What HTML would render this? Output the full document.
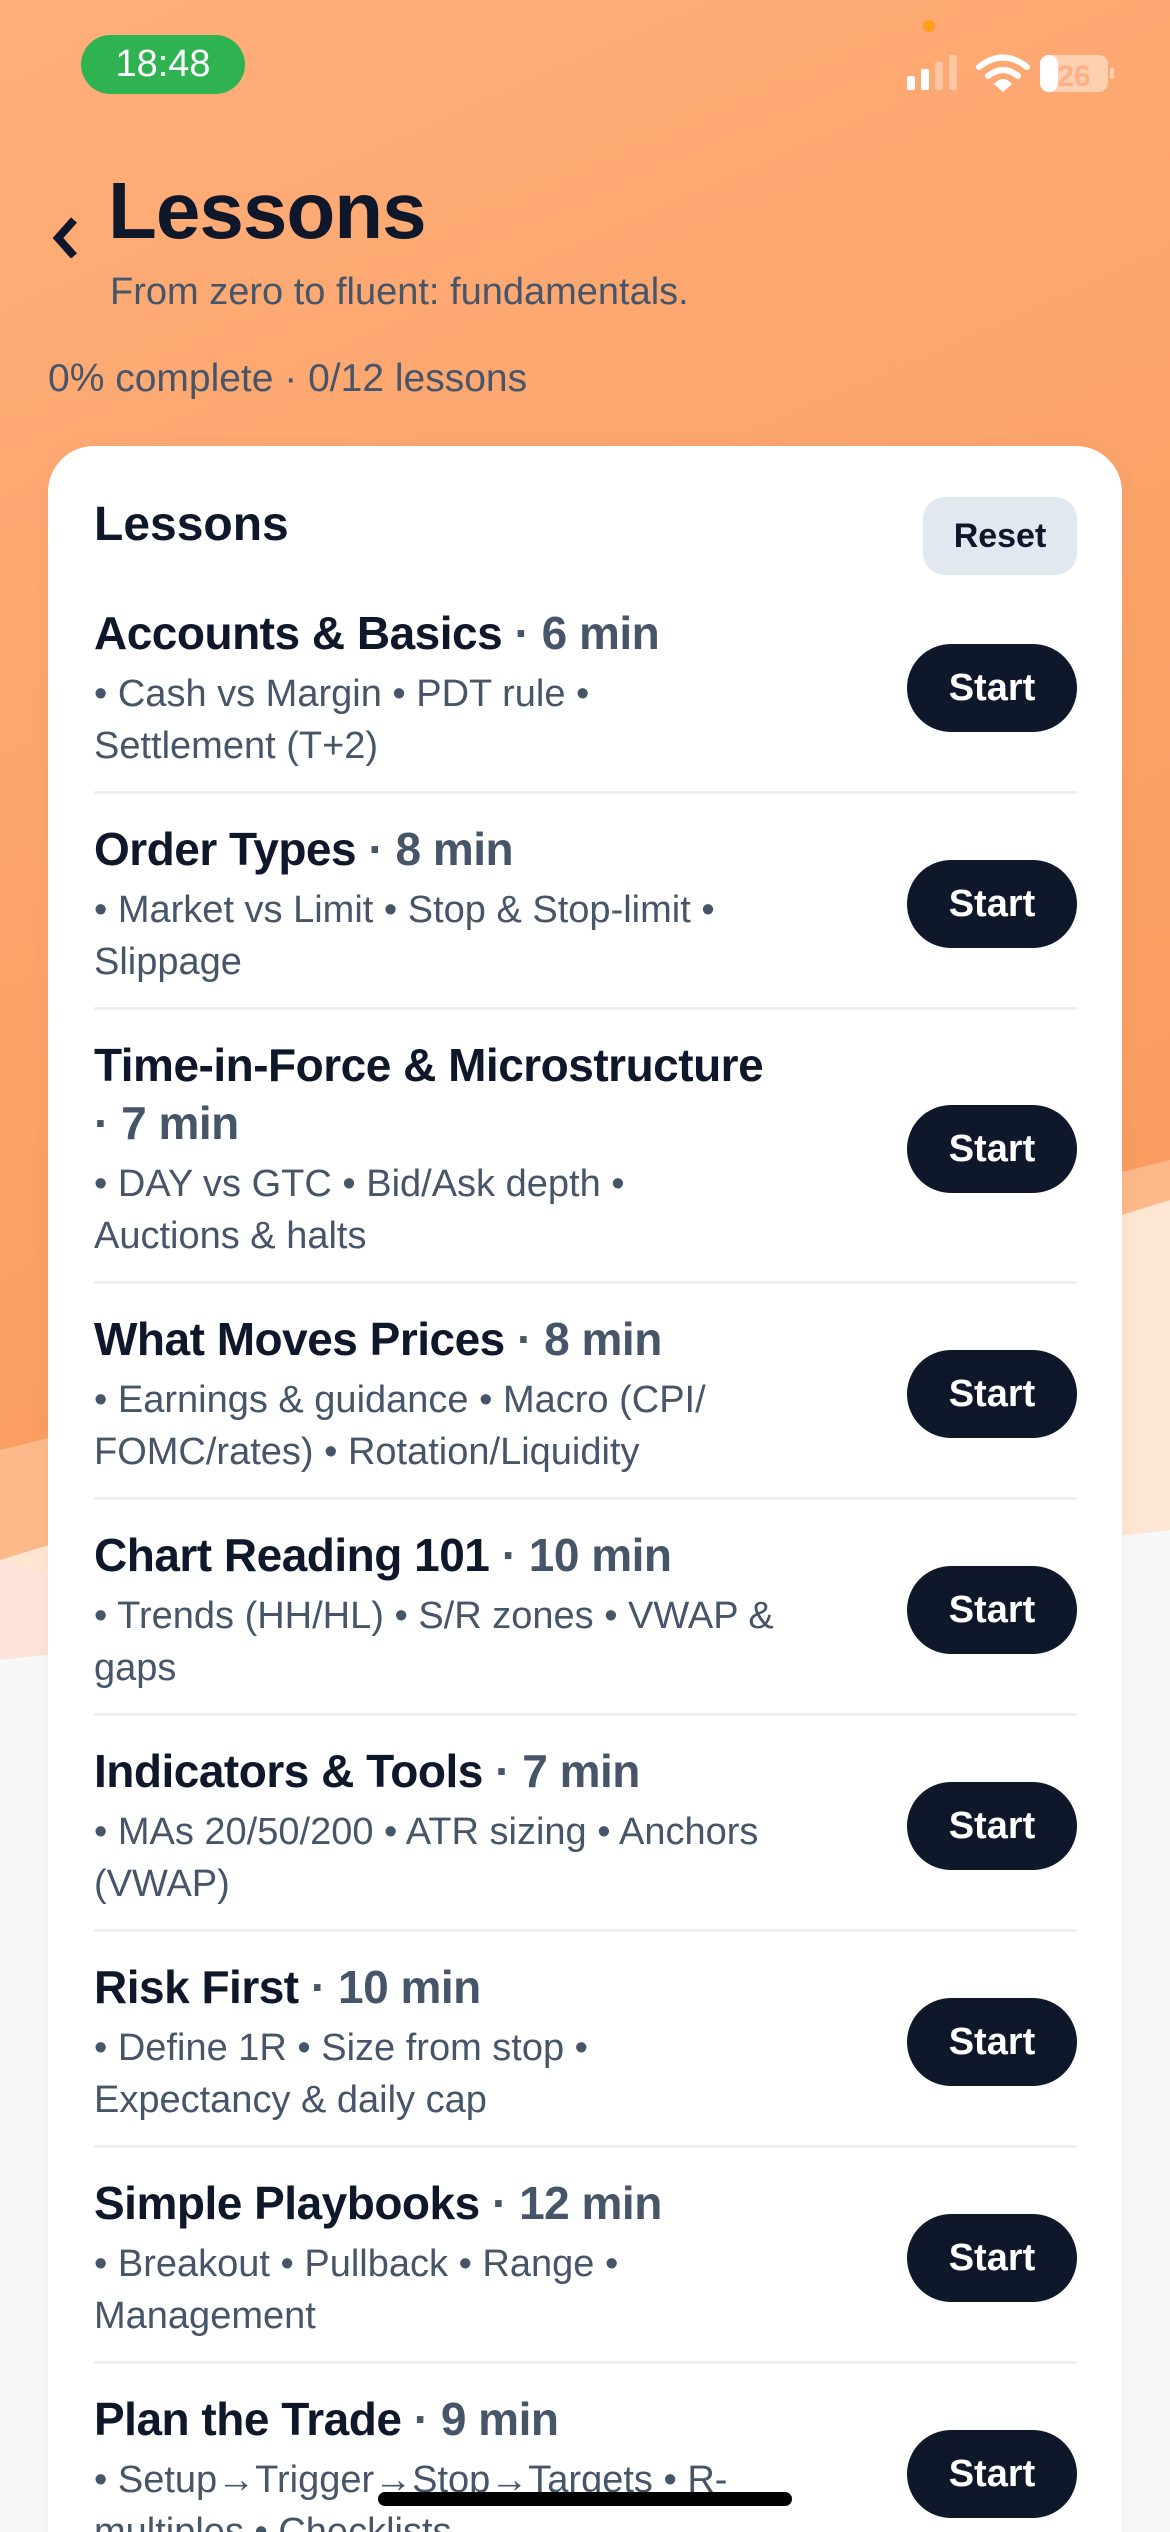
<!DOCTYPE html>
<html><head><meta charset="utf-8"><style>
*{margin:0;padding:0;box-sizing:border-box}
html,body{width:1170px;height:2532px;overflow:hidden}
body{font-family:"Liberation Sans",sans-serif;position:relative;background:#f8f8f8}
.bg{position:absolute;left:0;top:0}
.abs{position:absolute}
.card{position:absolute;left:48px;top:446px;width:1074px;height:2200px;background:#fff;border-radius:46px;padding:0 45px 0 46px;box-shadow:0 0 20px rgba(0,0,0,.04)}
.hdr{height:150px;position:relative}
.hdr h2{position:absolute;left:0;top:50px;font-size:48px;line-height:58px;color:#0f172a;font-weight:bold}
.reset{position:absolute;right:0;top:51px;width:154px;height:78px;border-radius:22px;background:#e2e8f0;color:#0f172a;font-weight:bold;font-size:34px;line-height:78px;text-align:center}
.row{display:flex;align-items:center;border-bottom:3px solid #efefef;padding:26px 0 19px}
.txt{flex:1;white-space:nowrap}
.t{font-size:46px;line-height:58px;font-weight:bold;color:#0f172a;letter-spacing:-0.5px}
.t span{color:#475569}
.d{font-size:38px;line-height:52px;color:#475569;margin-top:6px}
.btn{width:170px;height:88px;border-radius:44px;background:#0f172a;color:#fff;font-weight:bold;font-size:38px;line-height:88px;text-align:center}
</style></head><body>
<svg class="bg" width="1170" height="2532">
<defs><linearGradient id="g" x1="0" y1="0" x2="0.3" y2="1"><stop offset="0" stop-color="#ffae7a"/><stop offset="1" stop-color="#f99a5c"/></linearGradient></defs>
<rect width="1170" height="1700" fill="url(#g)"/>
<polygon points="0,1450 1170,1160 1170,1700 0,1700" fill="#fcc49a" opacity=".7"/>
<polygon points="0,1560 1170,1200 1170,1530 0,1660" fill="#fde6d2"/>
<polygon points="0,1560 400,1660 0,1660" fill="#fde3d8"/>
<rect y="1660" width="1170" height="900" fill="#f8f8f8"/>
<polygon points="0,1660 1170,1530 1170,1660" fill="#f8f8f8"/>
</svg>
<div class="abs" style="left:81px;top:35px;width:164px;height:59px;border-radius:30px;background:#2fb350;color:#fff;font-size:38px;line-height:59px;text-align:center">18:48</div>
<div class="abs" style="left:923px;top:20px;width:12px;height:12px;border-radius:6px;background:#ff9f1a"></div>
<svg class="abs" style="left:905px;top:54px" width="215" height="40">
<rect x="2" y="22" width="8" height="14" rx="2" fill="#fff"/>
<rect x="16" y="15" width="8" height="21" rx="2" fill="#fff"/>
<rect x="30" y="8" width="8" height="28" rx="2" fill="#fff" opacity=".35"/>
<rect x="44" y="1" width="8" height="35" rx="2" fill="#fff" opacity=".35"/>
<path d="M74 13 Q98 -6 122 13" stroke="#fff" stroke-width="6" fill="none" stroke-linecap="round"/>
<path d="M83 22 Q98 10 113 22" stroke="#fff" stroke-width="6" fill="none" stroke-linecap="round"/>
<path d="M89 30 Q98 20 107 30 L98 38 Z" fill="#fff"/>
<rect x="135" y="1" width="68" height="37" rx="9" fill="#fff" opacity=".45"/>
<rect x="135" y="1" width="18" height="37" rx="9" fill="#fff"/>
<rect x="205" y="14" width="4" height="11" rx="2" fill="#fff" opacity=".45"/>
<text x="169" y="32" font-family="Liberation Sans" font-weight="bold" font-size="30" fill="#fdb187" text-anchor="middle">26</text>
</svg>
<svg class="abs" style="left:50px;top:216px" width="30" height="42"><path d="M24 4 L8 22 L24 40" stroke="#0f172a" stroke-width="8" fill="none"/></svg>
<div class="abs" style="left:108px;top:166px;font-size:80px;line-height:90px;font-weight:bold;color:#0f172a;letter-spacing:-1px">Lessons</div>
<div class="abs" style="left:110px;top:268px;font-size:38px;line-height:48px;color:#475569">From zero to fluent: fundamentals.</div>
<div class="abs" style="left:48px;top:355px;font-size:39px;line-height:48px;color:#475569">0% complete · 0/12 lessons</div>
<div class="card">
<div class="hdr"><h2>Lessons</h2><div class="reset">Reset</div></div>
<div style="margin-top:-18px">
<div class="row"><div class="txt"><div class="t">Accounts &amp; Basics <span>· 6 min</span></div><div class="d">• Cash vs Margin • PDT rule •<br>Settlement (T+2)</div></div><div class="btn">Start</div></div>
<div class="row"><div class="txt"><div class="t">Order Types <span>· 8 min</span></div><div class="d">• Market vs Limit • Stop &amp; Stop-limit •<br>Slippage</div></div><div class="btn">Start</div></div>
<div class="row"><div class="txt"><div class="t">Time-in-Force &amp; Microstructure<br><span>· 7 min</span></div><div class="d">• DAY vs GTC • Bid/Ask depth •<br>Auctions &amp; halts</div></div><div class="btn">Start</div></div>
<div class="row"><div class="txt"><div class="t">What Moves Prices <span>· 8 min</span></div><div class="d">• Earnings &amp; guidance • Macro (CPI/<br>FOMC/rates) • Rotation/Liquidity</div></div><div class="btn">Start</div></div>
<div class="row"><div class="txt"><div class="t">Chart Reading 101 <span>· 10 min</span></div><div class="d">• Trends (HH/HL) • S/R zones • VWAP &amp;<br>gaps</div></div><div class="btn">Start</div></div>
<div class="row"><div class="txt"><div class="t">Indicators &amp; Tools <span>· 7 min</span></div><div class="d">• MAs 20/50/200 • ATR sizing • Anchors<br>(VWAP)</div></div><div class="btn">Start</div></div>
<div class="row"><div class="txt"><div class="t">Risk First <span>· 10 min</span></div><div class="d">• Define 1R • Size from stop •<br>Expectancy &amp; daily cap</div></div><div class="btn">Start</div></div>
<div class="row"><div class="txt"><div class="t">Simple Playbooks <span>· 12 min</span></div><div class="d">• Breakout • Pullback • Range •<br>Management</div></div><div class="btn">Start</div></div>
<div class="row"><div class="txt"><div class="t">Plan the Trade <span>· 9 min</span></div><div class="d">• Setup→Trigger→Stop→Targets • R-<br>multiples • Checklists</div></div><div class="btn">Start</div></div>
</div>
</div>
<div class="abs" style="left:378px;top:2492px;width:414px;height:14px;border-radius:7px;background:#000"></div>
</body></html>
